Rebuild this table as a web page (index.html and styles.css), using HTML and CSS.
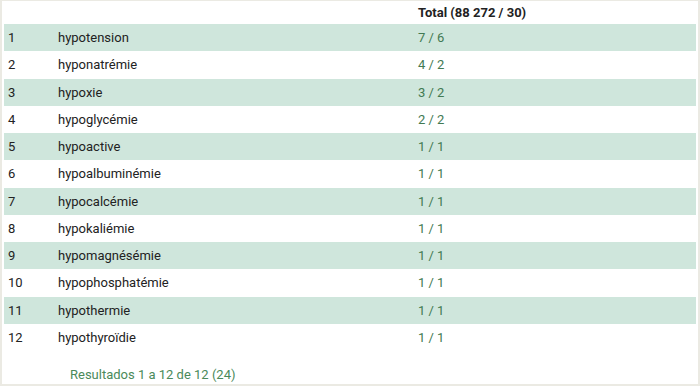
FILE: index.html
```html
<!DOCTYPE html>
<html lang="fr">
<head>
<meta charset="utf-8">
<link rel="stylesheet" href="styles.css">
</head>
<body>
<div class="frame">
  <table class="results">
    <thead>
      <tr><th class="c-num"></th><th class="c-name"></th><th class="c-total">Total (88 272 / 30)</th></tr>
    </thead>
    <tbody>
      <tr class="alt"><td>1</td><td>hypotension</td><td class="val">7 / 6</td></tr>
      <tr><td>2</td><td>hyponatrémie</td><td class="val">4 / 2</td></tr>
      <tr class="alt"><td>3</td><td>hypoxie</td><td class="val">3 / 2</td></tr>
      <tr><td>4</td><td>hypoglycémie</td><td class="val">2 / 2</td></tr>
      <tr class="alt"><td>5</td><td>hypoactive</td><td class="val">1 / 1</td></tr>
      <tr><td>6</td><td>hypoalbuminémie</td><td class="val">1 / 1</td></tr>
      <tr class="alt"><td>7</td><td>hypocalcémie</td><td class="val">1 / 1</td></tr>
      <tr><td>8</td><td>hypokaliémie</td><td class="val">1 / 1</td></tr>
      <tr class="alt"><td>9</td><td>hypomagnésémie</td><td class="val">1 / 1</td></tr>
      <tr><td>10</td><td>hypophosphatémie</td><td class="val">1 / 1</td></tr>
      <tr class="alt"><td>11</td><td>hypothermie</td><td class="val">1 / 1</td></tr>
      <tr><td>12</td><td>hypothyroïdie</td><td class="val">1 / 1</td></tr>
    </tbody>
  </table>
  <div class="footer">Resultados 1 a 12 de 12 (24)</div>
</div>
</body>
</html>
```

FILE: styles.css
```css
html, body {
  margin: 0;
  padding: 0;
  background: #ffffff;
}
body {
  font-family: Roboto, "Liberation Sans", sans-serif;
  font-size: 13px;
  color: #222222;
}
.frame {
  width: 700px;
  height: 386px;
  box-sizing: border-box;
  border: 2px solid #ebeae3;
  border-top-width: 1px;
  padding: 0 2px;
  display: flex;
  flex-direction: column;
}
.results {
  width: 100%;
  border-collapse: collapse;
}
.results th {
  height: 23px;
  padding: 0 4px;
  text-align: left;
  font-weight: bold;
  color: #222222;
  vertical-align: middle;
}
.results td {
  height: 27.25px;
  padding: 0 4px;
  vertical-align: middle;
  box-sizing: border-box;
}
.c-num { width: 42px; }
.c-name { width: 352px; }
.results tr.alt td {
  background: #cfe6dc;
}
.results td.val {
  color: #427a52;
}
.footer {
  padding: 16px 0 0 66px;
  color: #4a8a5a;
}
```
